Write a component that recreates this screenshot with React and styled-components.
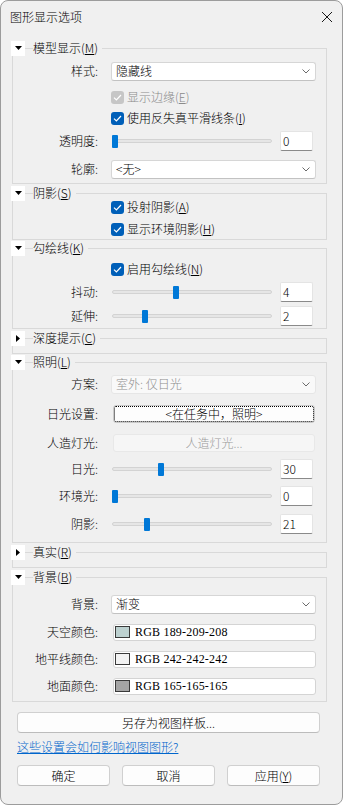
import React from 'react';
import styled, { createGlobalStyle } from 'styled-components';

const Global = createGlobalStyle`
  html, body { margin: 0; padding: 0; background: #ffffff; }
  body {
    font-family: "Noto Sans CJK SC", "Noto Sans", sans-serif;
    font-size: 12px;
    font-weight: 300;
    color: #000;
  }
  * { box-sizing: border-box; }
`;

const Window = styled.div`
  width: 343px;
  height: 805px;
  background: #f0f0f0;
  border: 1px solid #9c9c9c;
  border-radius: 8px;
  display: flex;
  flex-direction: column;
  overflow: hidden;
`;

const TitleBar = styled.div`
  height: 32px;
  flex: none;
  display: flex;
  align-items: center;
  justify-content: space-between;
  padding: 0 9px 0 9px;
`;

const TitleText = styled.span`
  font-size: 12px;
  line-height: 16px;
  color: #000;
`;

const Content = styled.div`
  display: flex;
  flex-direction: column;
  padding-top: 8px;
`;

const Group = styled.section`
  display: flex;
  flex-direction: column;
  margin-left: 11px;
  width: 315px;
  margin-top: ${p => p.$mt || 0}px;
`;

const Header = styled.div`
  position: relative;
  z-index: 1;
  display: flex;
  align-items: center;
  height: 14px;
`;

const Toggle = styled.span`
  width: 14px;
  height: 15px;
  margin-left: -1px;
  background: #ffffff;
  display: flex;
  align-items: center;
  justify-content: center;
`;

const HeaderText = styled.span`
  margin-left: 8px;
  padding-right: 4px;
  background: #f0f0f0;
  line-height: 14px;
  white-space: nowrap;
`;

const Body = styled.div`
  border: 1px solid #d9d9d9;
  margin-top: -7px;
  padding: ${p => p.$pt || 0}px 0 ${p => p.$pb || 0}px;
  ${p => (p.$collapsed ? 'height: 16px;' : '')}
`;

const Row = styled.div`
  display: flex;
  align-items: center;
  height: ${p => p.$h || 20}px;
  margin-top: ${p => p.$mt || 0}px;
  padding-left: ${p => (p.$indent ? 98 : 0)}px;
`;

const Label = styled.span`
  width: 85px;
  flex: none;
  text-align: right;
  margin-right: 13px;
  white-space: nowrap;
  line-height: 16px;
`;

const SelectBox = styled.div`
  width: 205px;
  height: 19px;
  display: flex;
  align-items: center;
  justify-content: space-between;
  padding: 0 5px 0 4px;
  background: ${p => (p.$disabled ? '#f9f9f9' : '#ffffff')};
  border: 1px solid ${p => (p.$disabled ? '#e6e6e6' : '#d6d6d6')};
  border-bottom-color: ${p => (p.$disabled ? '#e6e6e6' : '#c2c2c2')};
  border-radius: 3px;
  color: ${p => (p.$disabled ? '#8d8d8d' : '#000')};
  line-height: 16px;
`;

const CheckWrap = styled.label`
  display: flex;
  align-items: center;
  color: ${p => (p.$disabled ? '#8b8b8b' : '#000')};
  line-height: 16px;
`;

const Box = styled.span`
  width: 13px;
  height: 13px;
  border-radius: 3px;
  background: ${p => (p.$disabled ? '#c6c6c6' : '#005fb8')};
  display: flex;
  align-items: center;
  justify-content: center;
  margin-right: 3px;
  flex: none;
`;

const SliderArea = styled.div`
  width: 160px;
  margin-left: 1px;
  height: 20px;
  display: flex;
  align-items: center;
  flex: none;
`;

const Track = styled.div`
  position: relative;
  width: 100%;
  height: 4px;
  background: #e6e6e6;
  border: 1px solid #d3d3d3;
  border-radius: 2px;
`;

const Thumb = styled.div`
  position: absolute;
  top: -5px;
  width: 6px;
  height: 13px;
  background: #0078d7;
  border-radius: 1px;
`;

const NumBox = styled.div`
  width: 33px;
  height: 20px;
  margin-left: 8px;
  background: #fff;
  border: 1px solid #e4e4e4;
  border-bottom: 1px solid #8a8a8a;
  border-radius: 2px;
  padding-left: 2px;
  display: flex;
  align-items: center;
  line-height: 16px;
`;

const PushButton = styled.div`
  width: ${p => p.$w || 202}px;
  height: ${p => p.$h || 18}px;
  margin-left: ${p => p.$ml || 2}px;
  display: flex;
  align-items: center;
  justify-content: center;
  border-radius: 3px;
  line-height: 16px;
  background: ${p => (p.$disabled ? '#f6f6f6' : '#fdfdfd')};
  border: 1px solid ${p => (p.$disabled ? '#e8e8e8' : '#c9c9c9')};
  color: ${p => (p.$disabled ? '#9b9b9b' : '#000')};
  outline: ${p => (p.$focus ? '1px dotted #000' : 'none')};
  outline-offset: -2px;
`;

const ColorField = styled.div`
  width: 203px;
  height: 17px;
  margin-left: 2px;
  display: flex;
  align-items: center;
  background: #fff;
  border: 1px solid #d4d4d4;
  border-radius: 3px;
  padding-left: 1px;
  line-height: 14px;
`;

const Swatch = styled.span`
  width: 15px;
  height: 12px;
  border: 1px solid #3a3a3a;
  margin-right: 5px;
  flex: none;
`;

const ColorText = styled.span`
  font-family: "Liberation Serif", "Noto Sans CJK SC", serif;
  font-size: 12px;
  font-weight: 400;
  letter-spacing: 0.2px;
`;

const Footer = styled.div`
  display: flex;
  flex-direction: column;
  padding-left: 16px;
`;

const WideButton = styled.div`
  width: 303px;
  height: 21px;
  margin-top: 10px;
  display: flex;
  align-items: center;
  justify-content: center;
  background: #fdfdfd;
  border: 1px solid #d0d0d0;
  border-bottom-color: #bcbcbc;
  border-radius: 4px;
  line-height: 16px;
`;

const HelpLink = styled.a`
  margin-top: 6px;
  height: 16px;
  line-height: 16px;
  color: #0066cc;
  text-decoration: underline;
  align-self: flex-start;
  cursor: pointer;
`;

const ButtonRow = styled.div`
  display: flex;
  gap: 12px;
  margin-top: 10px;
`;

const DlgButton = styled.div`
  width: 93px;
  height: 21px;
  display: flex;
  align-items: center;
  justify-content: center;
  background: #fdfdfd;
  border: 1px solid #d0d0d0;
  border-bottom-color: #bcbcbc;
  border-radius: 4px;
  line-height: 16px;
`;

const Close = () => (
  <svg width="12" height="12" viewBox="0 0 12 12">
    <path d="M1 1 L11 11 M11 1 L1 11" stroke="#1a1a1a" strokeWidth="1" fill="none" />
  </svg>
);

const Chevron = () => (
  <svg width="8" height="5" viewBox="0 0 8 5">
    <path d="M0.5 0.5 L4 4 L7.5 0.5" fill="none" stroke="#6b6b6b" strokeWidth="1" />
  </svg>
);

const Tick = () => (
  <svg width="9" height="7" viewBox="0 0 9 7">
    <path d="M1 3.6 L3.4 6 L8 1" fill="none" stroke="#fff" strokeWidth="1.2" />
  </svg>
);

const Down = () => (
  <svg width="7" height="4" viewBox="0 0 7 4">
    <path d="M0 0 L7 0 L3.5 4 Z" fill="#000" />
  </svg>
);

const Right = () => (
  <svg width="4" height="7" viewBox="0 0 4 7">
    <path d="M0 0 L4 3.5 L0 7 Z" fill="#000" />
  </svg>
);

const GroupHeader = ({ title, open }) => (
  <Header>
    <Toggle>{open ? <Down /> : <Right />}</Toggle>
    <HeaderText>{title}</HeaderText>
  </Header>
);

const Mn = ({ pre, k }) => (
  <>
    {pre}(<u>{k}</u>)
  </>
);

const Select = ({ value, disabled }) => (
  <SelectBox $disabled={disabled}>
    <span>{value}</span>
    <Chevron />
  </SelectBox>
);

const Check = ({ children, disabled }) => (
  <CheckWrap $disabled={disabled}>
    <Box $disabled={disabled}>
      <Tick />
    </Box>
    {children}
  </CheckWrap>
);

const Slider = ({ frac, value }) => (
  <>
    <SliderArea>
      <Track>
        <Thumb style={{ left: `${Math.round(frac * 152) - 1}px` }} />
      </Track>
    </SliderArea>
    <NumBox>{value}</NumBox>
  </>
);

const ColorRow = ({ label, color, text, mt }) => (
  <Row $mt={mt}>
    <Label>{label}</Label>
    <ColorField>
      <Swatch style={{ background: color }} />
      <ColorText>{text}</ColorText>
    </ColorField>
  </Row>
);

export default function App() {
  return (
    <>
      <Global />
      <Window>
        <TitleBar>
          <TitleText>图形显示选项</TitleText>
          <Close />
        </TitleBar>
        <Content>
          <Group>
            <GroupHeader open title={<Mn pre="模型显示" k="M" />} />
            <Body $pt={12} $pb={4}>
              <Row>
                <Label>样式:</Label>
                <Select value="隐藏线" />
              </Row>
              <Row $indent $mt={6}>
                <Check disabled>
                  <Mn pre="显示边缘" k="E" />
                </Check>
              </Row>
              <Row $indent $mt={1}>
                <Check>
                  <Mn pre="使用反失真平滑线条" k="I" />
                </Check>
              </Row>
              <Row $mt={3}>
                <Label>透明度:</Label>
                <Slider frac={0} value="0" />
              </Row>
              <Row $mt={8}>
                <Label>轮廓:</Label>
                <Select value="<无>" />
              </Row>
            </Body>
          </Group>

          <Group $mt={2}>
            <GroupHeader open title={<Mn pre="阴影" k="S" />} />
            <Body $pt={3} $pb={0}>
              <Row $indent>
                <Check>
                  <Mn pre="投射阴影" k="A" />
                </Check>
              </Row>
              <Row $indent $mt={2}>
                <Check>
                  <Mn pre="显示环境阴影" k="H" />
                </Check>
              </Row>
            </Body>
          </Group>

          <Group $mt={1}>
            <GroupHeader open title={<Mn pre="勾绘线" k="K" />} />
            <Body $pt={10} $pb={2}>
              <Row $indent>
                <Check>
                  <Mn pre="启用勾绘线" k="N" />
                </Check>
              </Row>
              <Row $mt={3}>
                <Label>抖动:</Label>
                <Slider frac={0.4} value="4" />
              </Row>
              <Row $mt={4}>
                <Label>延伸:</Label>
                <Slider frac={0.2} value="2" />
              </Row>
            </Body>
          </Group>

          <Group $mt={2}>
            <GroupHeader title={<Mn pre="深度提示" k="C" />} />
            <Body $collapsed />
          </Group>

          <Group $mt={1}>
            <GroupHeader open title={<Mn pre="照明" k="L" />} />
            <Body $pt={11} $pb={8}>
              <Row>
                <Label>方案:</Label>
                <Select disabled value="室外: 仅日光" />
              </Row>
              <Row $mt={10}>
                <Label>日光设置:</Label>
                <PushButton $focus>&lt;在任务中，照明&gt;</PushButton>
              </Row>
              <Row $mt={9}>
                <Label>人造灯光:</Label>
                <PushButton $disabled>人造灯光...</PushButton>
              </Row>
              <Row $mt={6}>
                <Label>日光:</Label>
                <Slider frac={0.3} value="30" />
              </Row>
              <Row $mt={7}>
                <Label>环境光:</Label>
                <Slider frac={0} value="0" />
              </Row>
              <Row $mt={8}>
                <Label>阴影:</Label>
                <Slider frac={0.21} value="21" />
              </Row>
            </Body>
          </Group>

          <Group $mt={2}>
            <GroupHeader title={<Mn pre="真实" k="R" />} />
            <Body $collapsed />
          </Group>

          <Group $mt={2}>
            <GroupHeader open title={<Mn pre="背景" k="B" />} />
            <Body $pt={16} $pb={5}>
              <Row>
                <Label>背景:</Label>
                <Select value="渐变" />
              </Row>
              <ColorRow mt={8} label="天空颜色:" color="rgb(189,209,208)" text="RGB 189-209-208" />
              <ColorRow mt={7} label="地平线颜色:" color="rgb(242,242,242)" text="RGB 242-242-242" />
              <ColorRow mt={7} label="地面颜色:" color="rgb(165,165,165)" text="RGB 165-165-165" />
            </Body>
          </Group>

          <Footer>
            <WideButton>另存为视图样板...</WideButton>
            <HelpLink>这些设置会如何影响视图图形?</HelpLink>
            <ButtonRow>
              <DlgButton>确定</DlgButton>
              <DlgButton>取消</DlgButton>
              <DlgButton>
                <Mn pre="应用" k="Y" />
              </DlgButton>
            </ButtonRow>
          </Footer>
        </Content>
      </Window>
    </>
  );
}
